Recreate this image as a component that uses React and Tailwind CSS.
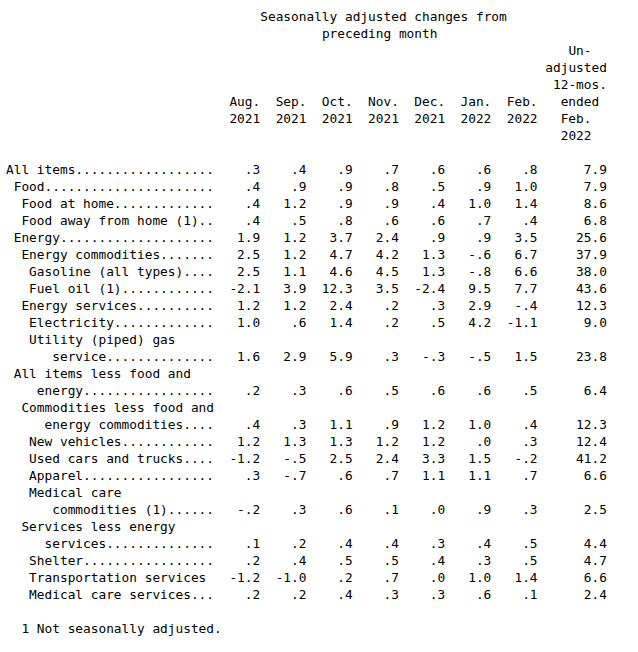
const LABEL_WIDTH = 27;

const rows = [
  [0, 'All items', ['.3', '.4', '.9', '.7', '.6', '.6', '.8', '7.9']],
  [1, 'Food', ['.4', '.9', '.9', '.8', '.5', '.9', '1.0', '7.9']],
  [2, 'Food at home', ['.4', '1.2', '.9', '.9', '.4', '1.0', '1.4', '8.6']],
  [2, 'Food away from home (1)', ['.4', '.5', '.8', '.6', '.6', '.7', '.4', '6.8']],
  [1, 'Energy', ['1.9', '1.2', '3.7', '2.4', '.9', '.9', '3.5', '25.6']],
  [2, 'Energy commodities', ['2.5', '1.2', '4.7', '4.2', '1.3', '-.6', '6.7', '37.9']],
  [3, 'Gasoline (all types)', ['2.5', '1.1', '4.6', '4.5', '1.3', '-.8', '6.6', '38.0']],
  [3, 'Fuel oil (1)', ['-2.1', '3.9', '12.3', '3.5', '-2.4', '9.5', '7.7', '43.6']],
  [2, 'Energy services', ['1.2', '1.2', '2.4', '.2', '.3', '2.9', '-.4', '12.3']],
  [3, 'Electricity', ['1.0', '.6', '1.4', '.2', '.5', '4.2', '-1.1', '9.0']],
  [3, 'Utility (piped) gas', null],
  [6, 'service', ['1.6', '2.9', '5.9', '.3', '-.3', '-.5', '1.5', '23.8']],
  [1, 'All items less food and', null],
  [4, 'energy', ['.2', '.3', '.6', '.5', '.6', '.6', '.5', '6.4']],
  [2, 'Commodities less food and', null],
  [5, 'energy commodities', ['.4', '.3', '1.1', '.9', '1.2', '1.0', '.4', '12.3']],
  [3, 'New vehicles', ['1.2', '1.3', '1.3', '1.2', '1.2', '.0', '.3', '12.4']],
  [3, 'Used cars and trucks', ['-1.2', '-.5', '2.5', '2.4', '3.3', '1.5', '-.2', '41.2']],
  [3, 'Apparel', ['.3', '-.7', '.6', '.7', '1.1', '1.1', '.7', '6.6']],
  [3, 'Medical care', null],
  [6, 'commodities (1)', ['-.2', '.3', '.6', '.1', '.0', '.9', '.3', '2.5']],
  [2, 'Services less energy', null],
  [5, 'services', ['.1', '.2', '.4', '.4', '.3', '.4', '.5', '4.4']],
  [3, 'Shelter', ['.2', '.4', '.5', '.5', '.4', '.3', '.5', '4.7']],
  [3, 'Transportation services', ['-1.2', '-1.0', '.2', '.7', '.0', '1.0', '1.4', '6.6'], true],
  [3, 'Medical care services', ['.2', '.2', '.4', '.3', '.3', '.6', '.1', '2.4']],
];

const months = [
  ['Aug.', '2021'],
  ['Sep.', '2021'],
  ['Oct.', '2021'],
  ['Nov.', '2021'],
  ['Dec.', '2021'],
  ['Jan.', '2022'],
  ['Feb.', '2022'],
];

function makeLabel(indent, text, values, noDots) {
  const base = ' '.repeat(indent) + text;
  if (!values || noDots) return base;
  return base.padEnd(LABEL_WIDTH, '.');
}

function Row({ children }) {
  return <div className="flex h-[17px] leading-[17px] whitespace-pre">{children}</div>;
}

export default function App() {
  return (
    <div
      className="min-h-screen bg-white text-black pl-[6px] pt-[8px] text-[12.8px]"
      style={{ fontFamily: '"DejaVu Sans Mono", "Liberation Mono", monospace' }}
    >
      {/* header block */}
      <Row><span className="ml-[33ch]">Seasonally adjusted changes from</span></Row>
      <Row><span className="ml-[41ch]">preceding month</span></Row>
      <Row><span className="ml-[73ch]">Un-</span></Row>
      <Row><span className="ml-[70ch]">adjusted</span></Row>
      <Row><span className="ml-[71ch]">12-mos.</span></Row>
      <Row>
        <span className="w-[27ch]" />
        {months.map(([m]) => (
          <span key={m} className="w-[6ch] text-right">{m}</span>
        ))}
        <span className="w-[9ch] pl-[3ch]">ended</span>
      </Row>
      <Row>
        <span className="w-[27ch]" />
        {months.map(([m, y]) => (
          <span key={m} className="w-[6ch] text-right">{y}</span>
        ))}
        <span className="w-[9ch] pl-[3ch]">Feb.</span>
      </Row>
      <Row>
        <span className="w-[69ch]" />
        <span className="w-[9ch] pl-[3ch]">2022</span>
      </Row>
      <Row />

      {/* table body */}
      {rows.map(([indent, text, values, noDots], i) => (
        <Row key={i}>
          <span className="w-[27ch]">{makeLabel(indent, text, values, noDots)}</span>
          {values &&
            values.slice(0, 7).map((v, j) => (
              <span key={j} className="w-[6ch] text-right">{v}</span>
            ))}
          {values && <span className="w-[9ch] text-right">{values[7]}</span>}
        </Row>
      ))}

      <Row />
      <Row><span className="ml-[2ch]">1 Not seasonally adjusted.</span></Row>
    </div>
  );
}
